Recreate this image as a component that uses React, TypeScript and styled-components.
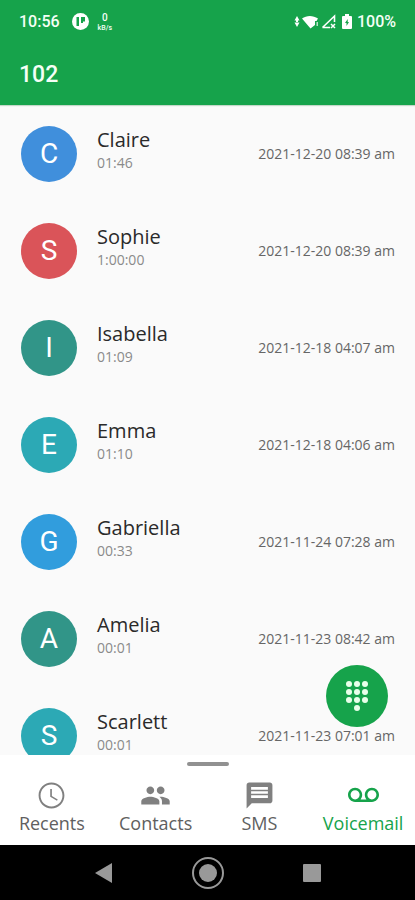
import React from "react";
import styled, { createGlobalStyle } from "styled-components";

const GlobalStyle = createGlobalStyle`
  * { box-sizing: border-box; }
  body { margin: 0; background: #fafafa; }
  button { border: 0; padding: 0; background: none; font: inherit; color: inherit; cursor: pointer; }
`;

const Screen = styled.div`
  display: flex;
  flex-direction: column;
  height: 100vh;
  overflow: hidden;
  background: #fafafa;
  font-family: "Open Sans", "Noto Sans", sans-serif;
`;

const Header = styled.header`
  flex: none;
  background: #16a34b;
  color: #f4fff6;
  font-family: Roboto, sans-serif;
  font-weight: 500;
  box-shadow: 0 1px 1px #c4d8c9;
`;

const StatusBar = styled.div`
  display: flex;
  justify-content: space-between;
  align-items: center;
  height: 43px;
  padding: 0 19px;
  font-size: 16px;
`;

const StatusGroup = styled.div<{ $gap: number }>`
  display: flex;
  align-items: center;
  gap: ${(p) => p.$gap}px;
`;

const Speed = styled.span`
  display: flex;
  flex-direction: column;
  align-items: center;
  margin-left: -3px;
  font-size: 7px;
  line-height: 8px;
`;

const SpeedValue = styled.span`
  font-size: 10px;
  line-height: 12px;
`;

const Title = styled.h1`
  display: flex;
  align-items: center;
  height: 62px;
  margin: 0;
  padding: 0 19px;
  font-size: 23px;
  font-weight: 500;
`;

const ListArea = styled.main`
  position: relative;
  flex: 1;
  min-height: 0;
`;

const CallList = styled.ul`
  height: 100%;
  margin: 0;
  padding: 0;
  overflow: hidden;
  list-style: none;
`;

const CallRow = styled.li`
  display: flex;
  align-items: center;
  height: 97px;
  padding: 0 20px 0 21px;
`;

const Avatar = styled.span<{ $color: string }>`
  display: flex;
  flex: none;
  align-items: center;
  justify-content: center;
  width: 56px;
  height: 56px;
  margin-right: 20px;
  border-radius: 50%;
  background: ${(p) => p.$color};
  color: #fff;
  font-family: Roboto, sans-serif;
  font-size: 28px;
`;

const Caller = styled.div`
  display: flex;
  flex: 1;
  flex-direction: column;
  padding-bottom: 8px;
`;

const Name = styled.span`
  color: #2a2a2a;
  font-size: 20px;
  line-height: 26px;
`;

const Duration = styled.span`
  color: #8a8a8a;
  font-size: 14px;
  line-height: 20px;
`;

const Stamp = styled.time`
  color: #666;
  font-size: 14px;
`;

const DialButton = styled.button`
  position: absolute;
  right: 27px;
  bottom: 28px;
  display: flex;
  align-items: center;
  justify-content: center;
  width: 62px;
  height: 62px;
  border-radius: 50%;
  && { background: #16a34b; }
`;

const BottomPanel = styled.footer`
  flex: none;
  background: #fff;
`;

const Handle = styled.div`
  width: 42px;
  height: 4px;
  margin: 7px auto 14px;
  border-radius: 2px;
  background: #919191;
`;

const Tabs = styled.nav`
  display: grid;
  grid-template-columns: repeat(4, 1fr);
  height: 65px;
`;

const Tab = styled.button<{ $active?: boolean }>`
  display: flex;
  flex-direction: column;
  align-items: center;
  min-width: 0;
  && { color: ${(p) => (p.$active ? "#16a34b" : "#808080")}; }
`;

const TabLabel = styled.span<{ $active?: boolean }>`
  color: ${(p) => (p.$active ? "#16a34b" : "#606060")};
  font-size: 18px;
  font-weight: 500;
  line-height: 24px;
`;

const SystemBar = styled.div`
  display: grid;
  flex: none;
  grid-template-columns: repeat(3, 104px);
  justify-content: center;
  height: 55px;
  background: #000;
`;

const SystemButton = styled.button`
  display: flex;
  align-items: center;
  justify-content: center;
`;

const calls = [
  { name: "Claire", duration: "01:46", date: "2021-12-20 08:39 am", color: "#408fdc" },
  { name: "Sophie", duration: "1:00:00", date: "2021-12-20 08:39 am", color: "#da5459" },
  { name: "Isabella", duration: "01:09", date: "2021-12-18 04:07 am", color: "#319588" },
  { name: "Emma", duration: "01:10", date: "2021-12-18 04:06 am", color: "#2ca9b5" },
  { name: "Gabriella", duration: "00:33", date: "2021-11-24 07:28 am", color: "#319ddd" },
  { name: "Amelia", duration: "00:01", date: "2021-11-23 08:42 am", color: "#319588" },
  { name: "Scarlett", duration: "00:01", date: "2021-11-23 07:01 am", color: "#2ca9b5" },
];

const AppBadge = () => (
  <svg width="17" height="17" viewBox="0 0 17 17" aria-hidden="true">
    <circle cx="8.5" cy="8.5" r="8.500" fill="#fff" />
    <path d="M4.500 4H7v9H4.500zM9 4h4v4.500H11V10H9z" fill="#16a34b" />
  </svg>
);

const SignalIcons = () => (
  <svg width="43" height="16" viewBox="0 0 43 16" fill="#fff" aria-hidden="true">
    <path d="M3 2l2.500 4.500h-5zM3 13l2.500-4.500h-5zM2 6h2v3H2z" />
    <path d="M8 4.500C12.500 1 19 1 24 4.500L22.500 7H21v4l-4.500 3.500z" />
    <path d="M22.500 8h1.500v4h-1.500z" opacity=".7" />
    <path d="M28.500 13.500L40.500 2v6M28.500 13.500H36" fill="none" stroke="#fff" strokeWidth="1.600" />
    <path d="M37 10l4 4M41 10l-4 4" stroke="#fff" strokeWidth="1.500" />
  </svg>
);

const BatteryIcon = () => (
  <svg width="10" height="16" viewBox="0 0 10 16" aria-hidden="true">
    <path d="M3 0h4v2h2q1 0 1 1v11q0 1-1 1H1q-1 0-1-1V3q0-1 1-1h2z" fill="#fff" />
    <path d="M5.700 5L3 9h1.500v3L7 8H5.700z" fill="#16a34b" />
  </svg>
);

const dialDots = [
  [4, 4], [12, 4], [20, 4],
  [4, 12], [12, 12], [20, 12],
  [4, 20], [12, 20], [20, 20],
  [12, 28],
];

const DialpadIcon = () => (
  <svg width="24" height="32" viewBox="0 0 24 32" fill="#e8ffea" aria-hidden="true">
    {dialDots.map(([x, y]) => (
      <circle key={`${x}-${y}`} cx={x} cy={y} r="3" />
    ))}
  </svg>
);

const tabs = [
  {
    label: "Recents",
    d: "M11.990 2C6.470 2 2 6.480 2 12s4.470 10 9.990 10C17.520 22 22 17.520 22 12S17.520 2 11.990 2zM12 20.500c-4.700 0-8.500-3.800-8.500-8.500s3.800-8.500 8.500-8.500 8.500 3.800 8.500 8.500-3.800 8.500-8.500 8.500zm.300-13.500H11v6l5.250 3.150.600-1.050-4.550-2.750z",
  },
  {
    label: "Contacts",
    d: "M16 11c1.660 0 2.990-1.340 2.990-3S17.660 5 16 5s-3 1.340-3 3 1.340 3 3 3zm-8 0c1.660 0 2.990-1.340 2.990-3S9.660 5 8 5 5 6.340 5 8s1.340 3 3 3zm0 2c-2.330 0-7 1.170-7 3.500V19h14v-2.500c0-2.330-4.670-3.500-7-3.500zm8 0c-.290 0-.620.020-.970.050 1.160.840 1.970 1.970 1.970 3.450V19h6v-2.500c0-2.330-4.670-3.500-7-3.500z",
  },
  {
    label: "SMS",
    d: "M20 2H4c-1.100 0-2 .900-2 2v18l4-4h14c1.100 0 2-.900 2-2V4c0-1.100-.900-2-2-2zM5.500 5.500h13v2h-13zm0 3.200h13v2h-13zm0 3.200h13v2h-13z",
  },
  {
    label: "Voicemail",
    active: true,
    d: "M18.500 6C15.460 6 13 8.460 13 11.500c0 1.330.470 2.550 1.260 3.500H9.740c.790-.950 1.260-2.170 1.260-3.500C11 8.460 8.540 6 5.500 6S0 8.460 0 11.500 2.460 17 5.500 17h13c3.040 0 5.500-2.460 5.500-5.500S21.540 6 18.500 6zm-13 9C3.570 15 2 13.430 2 11.500S3.570 8 5.500 8 9 9.570 9 11.500 7.430 15 5.500 15zm13 0c-1.930 0-3.500-1.570-3.500-3.500S16.570 8 18.500 8 22 9.570 22 11.500 20.430 15 18.500 15z",
  },
];

export default function App() {
  return (
    <Screen>
      <GlobalStyle />
      <Header>
        <StatusBar>
          <StatusGroup $gap={12}>
            <span>10:56</span>
            <AppBadge />
            <Speed>
              <SpeedValue>0</SpeedValue>
              <span>kB/s</span>
            </Speed>
          </StatusGroup>
          <StatusGroup $gap={5}>
            <SignalIcons />
            <BatteryIcon />
            <span>100%</span>
          </StatusGroup>
        </StatusBar>
        <Title>102</Title>
      </Header>
      <ListArea>
        <CallList>
          {calls.map((call) => (
            <CallRow key={call.name}>
              <Avatar $color={call.color}>{call.name[0]}</Avatar>
              <Caller>
                <Name>{call.name}</Name>
                <Duration>{call.duration}</Duration>
              </Caller>
              <Stamp>{call.date}</Stamp>
            </CallRow>
          ))}
        </CallList>
        <DialButton aria-label="Dial pad">
          <DialpadIcon />
        </DialButton>
      </ListArea>
      <BottomPanel>
        <Handle />
        <Tabs>
          {tabs.map((tab) => (
            <Tab key={tab.label} $active={tab.active}>
              <svg width="31" height="31" viewBox="0 0 24 24" fill="currentColor" aria-hidden="true">
                <path d={tab.d} fillRule="evenodd" />
              </svg>
              <TabLabel $active={tab.active}>{tab.label}</TabLabel>
            </Tab>
          ))}
        </Tabs>
      </BottomPanel>
      <SystemBar>
        <SystemButton aria-label="Back">
          <svg width="18" height="20" viewBox="0 0 18 20" fill="#999" aria-hidden="true">
            <path d="M0 10L17 0v20z" />
          </svg>
        </SystemButton>
        <SystemButton aria-label="Home">
          <svg width="34" height="34" viewBox="0 0 34 34" aria-hidden="true">
            <circle cx="17" cy="17" r="15" fill="none" stroke="#999" strokeWidth="2" />
            <circle cx="17" cy="17" r="9" fill="#999" />
          </svg>
        </SystemButton>
        <SystemButton aria-label="Overview">
          <svg width="18" height="18" viewBox="0 0 18 18" aria-hidden="true">
            <rect width="18" height="18" rx="1" fill="#999" />
          </svg>
        </SystemButton>
      </SystemBar>
    </Screen>
  );
}
